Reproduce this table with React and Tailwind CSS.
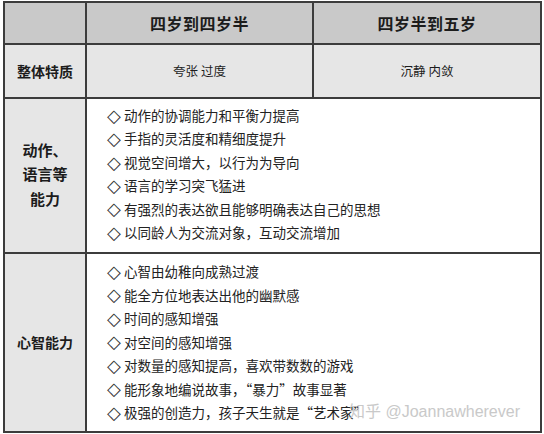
function Item({ t }) {
  return (
    <div className="whitespace-nowrap flex items-center">
      <span
        className="inline-block w-[17px] text-[18px] leading-none text-[#333] -ml-[1px]"
        style={{ fontFamily: '"DejaVu Sans", sans-serif' }}
      >
        {"\u25C7\uFE0E"}
      </span>
      <span>{t}</span>
    </div>
  );
}

export default function App() {
  const row3 = [
    "动作的协调能力和平衡力提高",
    "手指的灵活度和精细度提升",
    "视觉空间增大，以行为为导向",
    "语言的学习突飞猛进",
    "有强烈的表达欲且能够明确表达自己的思想",
    "以同龄人为交流对象，互动交流增加",
  ];
  const row4 = [
    "心智由幼稚向成熟过渡",
    "能全方位地表达出他的幽默感",
    "时间的感知增强",
    "对空间的感知增强",
    "对数量的感知提高，喜欢带数数的游戏",
    "能形象地编说故事，“暴力”故事显著",
    "极强的创造力，孩子天生就是“艺术家”",
  ];
  const cjk = { fontFamily: '"Noto Sans CJK SC", sans-serif' };
  return (
    <div className="w-[544px] h-[434px] bg-white relative overflow-hidden" style={cjk}>
      <div className="ml-[3px] mt-[1px] w-[539px] h-[432px] border-2 border-[#3c3c3c] bg-[#3c3c3c] grid grid-cols-[80px_225px_226px] grid-rows-[40px_52px_153px_177px] gap-[2px] text-[#1c1c1c]">
        <div className="bg-[#c9c9c9]" />
        <div className="bg-[#c9c9c9] flex items-center justify-center text-[16px] font-semibold tracking-[0.5px]">四岁到四岁半</div>
        <div className="bg-[#c9c9c9] flex items-center justify-center text-[16px] font-semibold tracking-[0.5px]">四岁半到五岁</div>

        <div className="bg-[#e6e6e6] flex items-center justify-center text-[14px] font-bold">整体特质</div>
        <div className="bg-[#e6e6e6] flex items-center justify-center text-[12.5px]">夸张 过度</div>
        <div className="bg-[#e6e6e6] flex items-center justify-center text-[12.5px]">沉静 内敛</div>

        <div className="bg-[#e6e6e6] flex flex-col items-center justify-center text-[15px] font-bold leading-[24.5px] pb-[2px]">
          <div>动作、</div>
          <div>语言等</div>
          <div>能力</div>
        </div>
        <div className="bg-white col-span-2 pl-[21px] pt-[5px] text-[13.5px] leading-[23.4px] text-[#222]">
          {row3.map((t) => (
            <Item key={t} t={t} />
          ))}
        </div>

        <div className="bg-[#e6e6e6] flex items-center justify-center text-[14px] font-bold">心智能力</div>
        <div className="bg-white col-span-2 pl-[21px] pt-[6px] text-[13.5px] leading-[23.5px] text-[#222]">
          {row4.map((t) => (
            <Item key={t} t={t} />
          ))}
        </div>
      </div>
      <div
        className="absolute left-[349px] top-[403px] text-[16px] leading-[18px] text-[#c4c4c4] opacity-90 whitespace-nowrap"
        style={{ fontFamily: '"Liberation Sans", "Noto Sans CJK SC", sans-serif' }}
      >
        知乎 @Joannawherever
      </div>
    </div>
  );
}
